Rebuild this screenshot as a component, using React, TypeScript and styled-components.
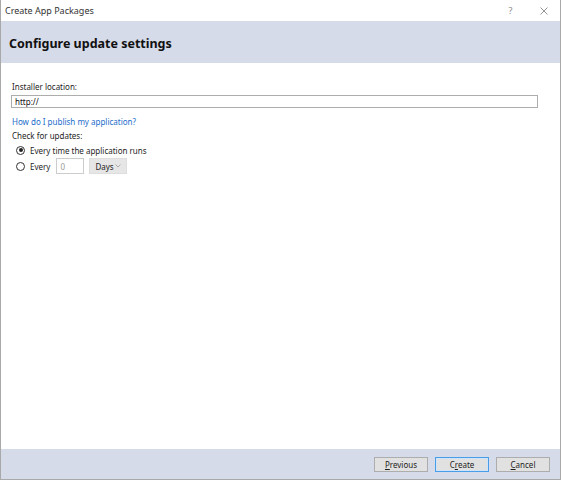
import React from 'react';
import styled, { createGlobalStyle } from 'styled-components';

const GlobalStyle = createGlobalStyle`
  html, body {
    margin: 0;
    padding: 0;
    background: #ffffff;
  }
  * {
    box-sizing: border-box;
  }
`;

const Window = styled.div`
    display: flex;
    flex-direction: column;
    width: 561px;
    height: 480px;
    background: #ffffff;
    border-left: 1px solid #a9a9a9;
    border-right: 1px solid #a9a9a9;
    border-bottom: 1px solid #a9a9a9;
    font-family: 'Noto Sans', 'Liberation Sans', sans-serif;
    font-size: 8px;
    color: #1e1e1e;
`;

const TitleBar = styled.div`
    display: flex;
    align-items: center;
    height: 21px;
    padding: 0 0 0 4px;
`;

const TitleText = styled.span`
    flex: 1;
    font-size: 9px;
    color: #333333;
`;

const CaptionButton = styled.span`
    display: flex;
    justify-content: center;
    align-items: center;
    width: 33px;
    font-size: 9px;
    color: #8a8a8a;
`;

const Banner = styled.div`
    display: flex;
    align-items: center;
    height: 42px;
    padding: 2px 8px 0;
    background: #d6dbe9;
`;

const Heading = styled.h1`
    margin: 0;
    font-size: 12.5px;
    font-weight: 700;
    color: #111111;
`;

const Body = styled.div`
    flex: 1;
    display: flex;
    flex-direction: column;
    padding: 17px 22px 0 10px;
`;

const Label = styled.div<{ $gap?: number }>`
    margin-top: ${({ $gap }) => $gap ?? 0}px;
    padding-left: 1px;
    line-height: 13px;
`;

const TextInput = styled.div<{ $width?: number; $disabled?: boolean }>`
    display: flex;
    align-items: center;
    width: ${({ $width }) => ($width ? `${$width}px` : '100%')};
    height: ${({ $width }) => ($width ? '16px' : '13px')};
    margin-top: ${({ $width }) => ($width ? '0' : '2px')};
    padding: 0 3px;
    border: 1px solid ${({ $disabled }) => ($disabled ? '#cccccc' : '#adadad')};
    color: ${({ $disabled }) => ($disabled ? '#9a9a9a' : '#111111')};
    background: #ffffff;
`;

const HelpLink = styled.a`
    margin-top: 7px;
    padding-left: 1px;
    line-height: 13px;
    color: #1a6dca;
    text-decoration: none;
`;

const Options = styled.div`
    display: flex;
    flex-direction: column;
    padding-left: 5px;
`;

const OptionRow = styled.label`
    display: flex;
    align-items: center;
    height: 16px;
`;

const Radio = styled.span<{ $checked?: boolean }>`
    position: relative;
    width: 9px;
    height: 9px;
    margin-right: 5px;
    border: 1px solid #333333;
    border-radius: 50%;

    &::after {
        content: '';
        display: ${({ $checked }) => ($checked ? 'block' : 'none')};
        position: absolute;
        top: 1.5px;
        left: 1.5px;
        width: 4px;
        height: 4px;
        border-radius: 50%;
        background: #222222;
    }
`;

const Spin = styled(TextInput)`
    margin-left: 6px;
`;

const Select = styled.div`
    display: flex;
    align-items: center;
    justify-content: space-between;
    width: 38px;
    height: 16px;
    margin-left: 5px;
    padding: 0 5px 0 5px;
    background: #e6e6e6;
    border: 1px solid #dedede;
    color: #222222;
`;

const Chevron = styled.svg`
    width: 6px;
    height: 4px;
`;

const Footer = styled.div`
    display: flex;
    justify-content: flex-end;
    align-items: center;
    gap: 7px;
    height: 30px;
    padding: 0 10px 0 0;
    background: #d6dbe9;
`;

const Button = styled.button<{ $default?: boolean }>`
    width: 54px;
    height: 15px;
    padding: 0;
    font-family: inherit;
    font-size: 8px;
    line-height: 13px;
    color: #1e1e1e;
    background: #e1e1e1;
    border: 1px solid ${({ $default }) => ($default ? '#4a9ee8' : '#adadad')};
    box-shadow: ${({ $default }) => ($default ? 'inset 0 0 0 1px #cfe4f8' : 'none')};
`;

const Key = styled.span`
    text-decoration: underline;
`;

export default function App() {
    return (
        <>
            <GlobalStyle />
            <Window>
                <TitleBar>
                    <TitleText>Create App Packages</TitleText>
                    <CaptionButton>?</CaptionButton>
                    <CaptionButton>
                        <svg width="8" height="8" viewBox="0 0 8 8">
                            <path d="M0.5 0.5 L7.5 7.5 M7.5 0.5 L0.5 7.5" stroke="#8a8a8a" strokeWidth="0.9" />
                        </svg>
                    </CaptionButton>
                </TitleBar>
                <Banner>
                    <Heading>Configure update settings</Heading>
                </Banner>
                <Body>
                    <Label>Installer location:</Label>
                    <TextInput>http://</TextInput>
                    <HelpLink href="#">How do I publish my application?</HelpLink>
                    <Label $gap={1}>Check for updates:</Label>
                    <Options>
                        <OptionRow>
                            <Radio $checked />
                            Every time the application runs
                        </OptionRow>
                        <OptionRow>
                            <Radio />
                            Every
                            <Spin $width={28} $disabled>
                                0
                            </Spin>
                            <Select>
                                Days
                                <Chevron viewBox="0 0 6 4">
                                    <path d="M0.5 0.5 L3 3 L5.5 0.5" fill="none" stroke="#a0a0a0" strokeWidth="0.8" />
                                </Chevron>
                            </Select>
                        </OptionRow>
                    </Options>
                </Body>
                <Footer>
                    <Button>
                        <Key>P</Key>revious
                    </Button>
                    <Button $default>
                        C<Key>r</Key>eate
                    </Button>
                    <Button>
                        <Key>C</Key>ancel
                    </Button>
                </Footer>
            </Window>
        </>
    );
}
